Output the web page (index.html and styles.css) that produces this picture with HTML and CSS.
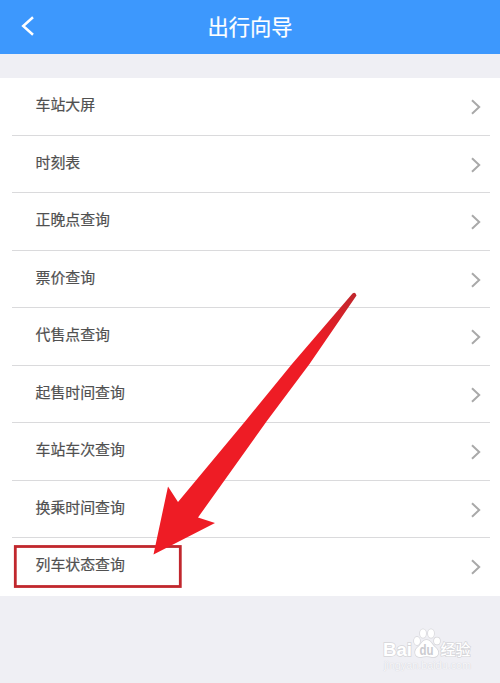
FILE: index.html
```
<!DOCTYPE html>
<html lang="zh-CN">
<head>
<meta charset="utf-8">
<title>出行向导</title>
<link rel="stylesheet" href="styles.css">
</head>
<body>
<header class="bar">
  <svg class="back" viewBox="0 0 14 20"><path d="M12 1.2 2.2 10 12 18.8"/></svg>
  <h1>出行向导</h1>
</header>
<main class="list">
  <div class="row"><span>车站大屏</span><svg class="chev" viewBox="0 0 10 16"><path d="M1 1.2 8.2 8 1 14.8"/></svg></div>
  <div class="row"><span>时刻表</span><svg class="chev" viewBox="0 0 10 16"><path d="M1 1.2 8.2 8 1 14.8"/></svg></div>
  <div class="row"><span>正晚点查询</span><svg class="chev" viewBox="0 0 10 16"><path d="M1 1.2 8.2 8 1 14.8"/></svg></div>
  <div class="row"><span>票价查询</span><svg class="chev" viewBox="0 0 10 16"><path d="M1 1.2 8.2 8 1 14.8"/></svg></div>
  <div class="row"><span>代售点查询</span><svg class="chev" viewBox="0 0 10 16"><path d="M1 1.2 8.2 8 1 14.8"/></svg></div>
  <div class="row"><span>起售时间查询</span><svg class="chev" viewBox="0 0 10 16"><path d="M1 1.2 8.2 8 1 14.8"/></svg></div>
  <div class="row"><span>车站车次查询</span><svg class="chev" viewBox="0 0 10 16"><path d="M1 1.2 8.2 8 1 14.8"/></svg></div>
  <div class="row"><span>换乘时间查询</span><svg class="chev" viewBox="0 0 10 16"><path d="M1 1.2 8.2 8 1 14.8"/></svg></div>
  <div class="row"><span>列车状态查询</span><svg class="chev" viewBox="0 0 10 16"><path d="M1 1.2 8.2 8 1 14.8"/></svg></div>
</main>
<svg class="annotation" viewBox="0 0 500 683">
  <defs>
    <linearGradient id="shaft" gradientUnits="userSpaceOnUse" x1="355" y1="294" x2="318" y2="345">
      <stop offset="0" stop-color="#c1272d"/>
      <stop offset="1" stop-color="#ee1c25"/>
    </linearGradient>
  </defs>
  <rect x="15.3" y="546.5" width="165" height="40" fill="none" stroke="#c1272d" stroke-width="2.800"/>
  <path d="M153.5 554.5 168 486.500 178 502 245 421.500 292 364 352.500 293.500Q355.500 291.500 356.500 295.500L309.500 364 266.500 421.500 198 517.500 215 523Z" fill="url(#shaft)"/>
</svg>
<div class="mark">
  <svg class="logo" viewBox="0 0 92 32">
    <g class="ink">
      <text class="latin" x="1" y="28" textLength="29" lengthAdjust="spacingAndGlyphs">Bai</text>
      <ellipse cx="35" cy="13" rx="3" ry="4"/>
      <ellipse cx="41" cy="5.500" rx="3" ry="4.200"/>
      <ellipse cx="49" cy="5.500" rx="3" ry="4.200"/>
      <ellipse cx="55" cy="13" rx="3" ry="3.500"/>
      <path d="M44.500 12C49 12 50 17 53 19C59 24 56 30 50 29C46 28 43 28 39 29C33 30 31 23 36 19C39 17 40 12 44.500 12Z"/>
      <text class="cjk" x="58.500" y="27" textLength="30">经验</text>
    </g>
    <text class="du" x="37.500" y="27" textLength="14" lengthAdjust="spacingAndGlyphs">du</text>
  </svg>
  <div class="site">jingyan.baidu.com</div>
</div>
</body>
</html>
```
FILE: styles.css
```
* { box-sizing: border-box; }
body {
  margin: 0;
  height: 683px;
  position: relative;
  overflow: hidden;
  background: #efeff4;
  font-family: "Noto Sans CJK SC", sans-serif;
}
.bar {
  height: 54px;
  margin-bottom: 24px;
  background: #3d98fd;
  display: grid;
  grid-template-columns: 50px 1fr 50px;
  align-items: center;
}
.back {
  width: 14px;
  height: 20px;
  margin-left: 21px;
  margin-top: -2px;
  fill: none;
  stroke: #fff;
  stroke-width: 2.5;
}
h1 {
  margin: -2px 0 0;
  color: #fff;
  font-size: 21.300px;
  font-weight: 400;
  line-height: 52px;
  text-align: center;
  -webkit-text-stroke: 0.200px #fff;
}
.list {
  height: 517.500px;
  padding: 0 10px 0 12px;
  background: #fff;
  display: grid;
  grid-template-rows: repeat(9, 1fr);
}
.row {
  display: flex;
  align-items: center;
  justify-content: space-between;
  padding: 0 9px 0 23.500px;
  border-bottom: 1px solid #dadadc;
  color: #505050;
  font-size: 14.900px;
  line-height: 22px;
  -webkit-text-stroke: 0.200px #505050;
}
.row span { margin-top: -4px; }
.row:last-child { border-bottom-color: transparent; }
.chev {
  width: 10px;
  height: 16px;
  margin-top: 2px;
  fill: none;
  stroke: #a9a9a9;
  stroke-width: 2;
}
.annotation {
  position: absolute;
  left: 0;
  top: 0;
  width: 500px;
  height: 683px;
}
.mark {
  position: absolute;
  left: 382px;
  top: 628px;
  width: 92px;
}
.logo {
  display: block;
  width: 92px;
  height: 32px;
  overflow: visible;
}
.ink {
  fill: #fff;
  stroke: #d5d5d9;
  stroke-width: 1.400;
  paint-order: stroke;
}
.latin { font: 700 18px "Liberation Sans", sans-serif; }
.cjk { font: 500 15px "Noto Sans CJK SC", sans-serif; }
.du {
  font: 700 14px "Liberation Sans", sans-serif;
  fill: #cbcbd0;
}
.site {
  margin-top: -1px;
  padding-left: 2px;
  font: 10.800px/12px "Liberation Sans", sans-serif;
  color: #f8f8fb;
  text-shadow: 0 0 1px #c4c4ca;
  white-space: nowrap;
}
```
